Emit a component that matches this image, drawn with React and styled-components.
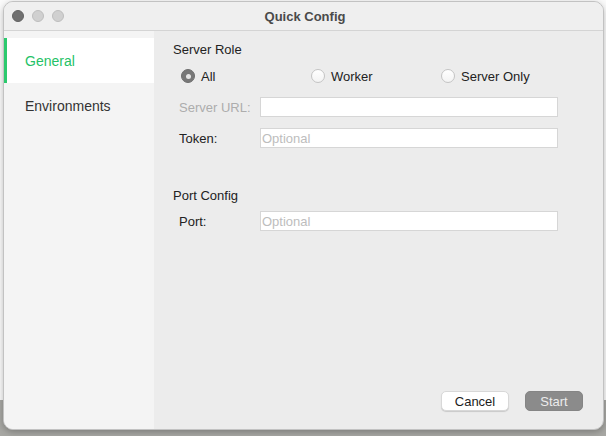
import React from 'react';
import styled, { createGlobalStyle } from 'styled-components';

const GlobalStyle = createGlobalStyle`
  * { box-sizing: border-box; }
  html, body { margin: 0; padding: 0; }
  body {
    font-family: "Liberation Sans", Arial, sans-serif;
    font-size: 13px;
    color: #222;
  }
`;

const Desktop = styled.div`
  width: 606px;
  height: 436px;
  padding: 1px 2px 6px 3px;
  background: linear-gradient(#fafafa 0, #fafafa 400px, #a7a7a3 400px);
  overflow: hidden;
`;

const Window = styled.div`
  height: 100%;
  display: flex;
  flex-direction: column;
  border: 1px solid #c2c2c2;
  border-radius: 10px;
  overflow: hidden;
  background: #ececec;
  box-shadow: 0 2px 6px rgba(0, 0, 0, 0.25);
`;

const TitleBar = styled.div`
  position: relative;
  height: 29px;
  flex: none;
  display: flex;
  align-items: center;
  justify-content: center;
  background: #efefef;
  border-bottom: 1px solid #d4d4d4;
`;

const Lights = styled.div`
  position: absolute;
  left: 8px;
  top: 8px;
  display: flex;
  gap: 8px;
`;

const Light = styled.span`
  width: 12px;
  height: 12px;
  border-radius: 50%;
  background: ${p => (p.$active ? '#707070' : '#d0d0d0')};
  border: 1px solid ${p => (p.$active ? '#636363' : '#bdbdbd')};
`;

const Title = styled.div`
  font-size: 13px;
  font-weight: 700;
  color: #4a4a4a;
  padding-left: 3px;
`;

const Body = styled.div`
  flex: 1;
  display: flex;
  min-height: 0;
`;

const Sidebar = styled.div`
  width: 150px;
  flex: none;
  background: #f4f4f4;
  padding-top: 7px;
  display: flex;
  flex-direction: column;
`;

const NavItem = styled.div`
  height: 45px;
  display: flex;
  align-items: center;
  padding-left: ${p => (p.$active ? '18px' : '21px')};
  font-size: 14px;
  color: ${p => (p.$active ? '#25c267' : '#333')};
  background: ${p => (p.$active ? '#fff' : 'transparent')};
  border-left: ${p => (p.$active ? '3px solid #2bc96d' : 'none')};
`;

const Main = styled.div`
  flex: 1;
  display: flex;
  flex-direction: column;
  padding: 11px 20px 18px 19px;
`;

const SectionTitle = styled.div`
  line-height: 16px;
  font-size: 13px;
  color: #222;
  margin-top: ${p => p.$top || 0}px;
`;

const RadioRow = styled.div`
  display: grid;
  grid-template-columns: 130px 130px 130px;
  margin: 8px 0 0 8px;
  height: 20px;
`;

const RadioOption = styled.label`
  display: flex;
  align-items: center;
  gap: 6px;
  font-size: 13px;
  color: #222;
`;

const RadioDot = styled.span`
  width: 14px;
  height: 14px;
  border-radius: 50%;
  display: flex;
  align-items: center;
  justify-content: center;
  background: ${p => (p.$checked ? '#787878' : 'linear-gradient(#fff, #f3f3f3)')};
  border: 1px solid ${p => (p.$checked ? '#6e6e6e' : '#c4c4c4')};
  &::after {
    content: '';
    width: 5px;
    height: 5px;
    border-radius: 50%;
    background: #e6e6e6;
    display: ${p => (p.$checked ? 'block' : 'none')};
  }
`;

const FieldRow = styled.div`
  display: flex;
  align-items: center;
  margin: ${p => p.$top}px 25px 0 6px;
  height: 20px;
`;

const FieldLabel = styled.span`
  width: 81px;
  flex: none;
  font-size: 13px;
  color: ${p => (p.$disabled ? '#adadad' : '#222')};
`;

const Input = styled.input`
  flex: 1;
  height: 20px;
  border: 1px solid #d6d6d6;
  background: #fff;
  padding: 0 1px;
  font-family: "Liberation Sans", Arial, sans-serif;
  font-size: 13px;
  color: #222;
  outline: none;
  &::placeholder { color: #bdbdbd; }
`;

const Footer = styled.div`
  margin-top: auto;
  display: flex;
  justify-content: flex-end;
  gap: 16px;
`;

const Button = styled.button`
  height: 20px;
  padding: 0;
  width: ${p => p.$w}px;
  border-radius: 5px;
  font-family: "Liberation Sans", Arial, sans-serif;
  font-size: 13px;
  border: ${p => (p.$primary ? '1px solid #858585' : '1px solid #d8d8d8')};
  background: ${p => (p.$primary ? '#8b8b8b' : '#fff')};
  color: ${p => (p.$primary ? '#ececec' : '#1c1c1c')};
  box-shadow: ${p => (p.$primary ? 'none' : '0 1px 1px rgba(0,0,0,0.15)')};
`;

const roles = ['All', 'Worker', 'Server Only'];

export default function App() {
  return (
    <>
      <GlobalStyle />
      <Desktop>
        <Window>
          <TitleBar>
            <Lights>
              <Light $active />
              <Light />
              <Light />
            </Lights>
            <Title>Quick Config</Title>
          </TitleBar>
          <Body>
            <Sidebar>
              <NavItem $active>General</NavItem>
              <NavItem>Environments</NavItem>
            </Sidebar>
            <Main>
              <SectionTitle>Server Role</SectionTitle>
              <RadioRow>
                {roles.map((r, i) => (
                  <RadioOption key={r}>
                    <RadioDot $checked={i === 0} />
                    {r}
                  </RadioOption>
                ))}
              </RadioRow>
              <FieldRow $top={11}>
                <FieldLabel $disabled>Server URL:</FieldLabel>
                <Input disabled />
              </FieldRow>
              <FieldRow $top={11}>
                <FieldLabel>Token:</FieldLabel>
                <Input placeholder="Optional" />
              </FieldRow>
              <SectionTitle $top={40}>Port Config</SectionTitle>
              <FieldRow $top={7}>
                <FieldLabel>Port:</FieldLabel>
                <Input placeholder="Optional" />
              </FieldRow>
              <Footer>
                <Button $w={68}>Cancel</Button>
                <Button $primary $w={58}>Start</Button>
              </Footer>
            </Main>
          </Body>
        </Window>
      </Desktop>
    </>
  );
}
